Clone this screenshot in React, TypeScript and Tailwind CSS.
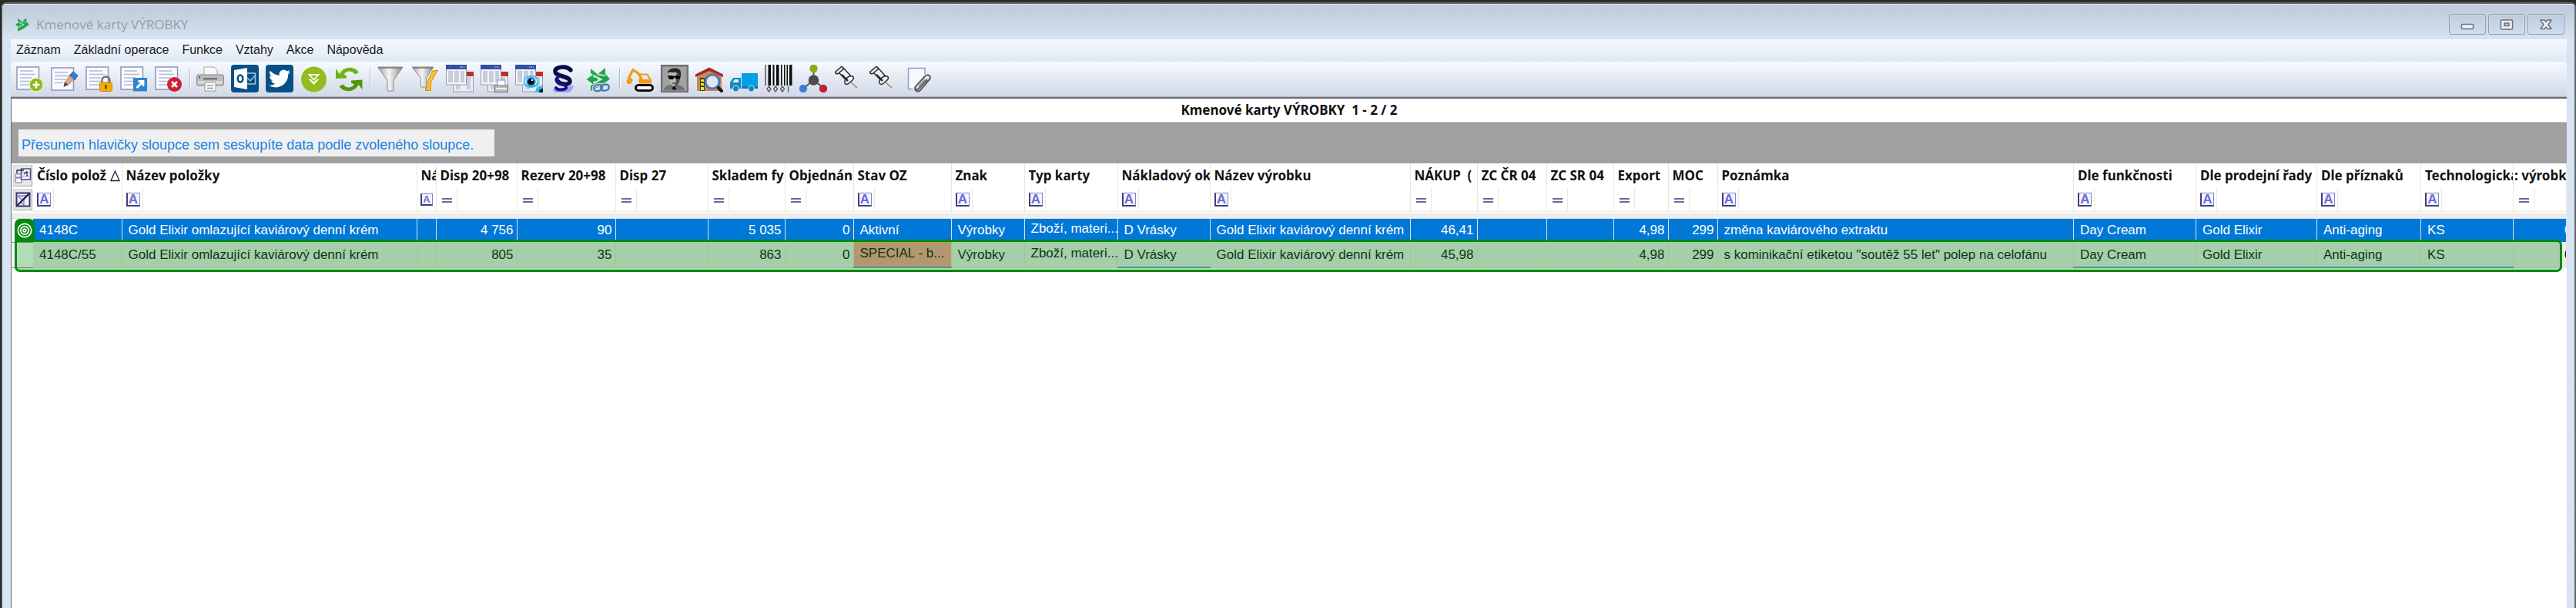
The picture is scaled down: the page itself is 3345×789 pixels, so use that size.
import React from "react";

type Filter = "A" | "=";
type Column = {
  title: string;
  width?: string;
  filter: Filter;
  align?: "right";
  cells: [string, string];
  sorted?: boolean;
  raised?: boolean;
  underline?: boolean;
  flagged?: boolean;
  narrow?: boolean;
  cut?: boolean;
};

const KREM = "Gold Elixir kaviárový denní krém";
const KREM_LONG = "Gold Elixir omlazující kaviárový denní krém";

const columns: Column[] = [
  { title: "Číslo polož", width: "w-[115px]", filter: "A", cells: ["4148C", "4148C/55"], sorted: true },
  { title: "Název položky", width: "w-[383px]", filter: "A", cells: [KREM_LONG, KREM_LONG] },
  { title: "Ná", width: "w-[25px]", filter: "A", cells: ["", ""], narrow: true },
  { title: "Disp 20+98", width: "w-[105px]", filter: "=", align: "right", cells: ["4 756", "805"] },
  { title: "Rezerv 20+98", width: "w-[128px]", filter: "=", align: "right", cells: ["90", "35"] },
  { title: "Disp 27", width: "w-[120px]", filter: "=", align: "right", cells: ["", ""] },
  { title: "Skladem fy", width: "w-[100px]", filter: "=", align: "right", cells: ["5 035", "863"] },
  { title: "Objednán", width: "w-[89px]", filter: "=", align: "right", cells: ["0", "0"] },
  { title: "Stav OZ", width: "w-[127px]", filter: "A", cells: ["Aktivní", "SPECIAL - b..."], flagged: true, underline: true },
  { title: "Znak", width: "w-[95px]", filter: "A", cells: ["Výrobky", "Výrobky"] },
  { title: "Typ karty", width: "w-[121px]", filter: "A", cells: ["Zboží, materi...", "Zboží, materi..."], raised: true },
  { title: "Nákladový ok", width: "w-[120px]", filter: "A", cells: ["D Vrásky", "D Vrásky"], underline: true },
  { title: "Název výrobku", width: "w-[260px]", filter: "A", cells: [KREM, KREM] },
  { title: "NÁKUP  (", width: "w-[87px]", filter: "=", align: "right", cells: ["46,41", "45,98"] },
  { title: "ZC ČR 04", width: "w-[90px]", filter: "=", align: "right", cells: ["", ""] },
  { title: "ZC SR 04", width: "w-[87px]", filter: "=", align: "right", cells: ["", ""] },
  { title: "Export", width: "w-[71px]", filter: "=", align: "right", cells: ["4,98", "4,98"] },
  { title: "MOC", width: "w-[64px]", filter: "=", align: "right", cells: ["299", "299"] },
  { title: "Poznámka", filter: "A", cells: ["změna kaviárového extraktu", 's kominikační etiketou "soutěž 55 let" polep na celofánu'] },
  { title: "Dle funkčnosti", width: "w-[159px]", filter: "A", cells: ["Day Cream", "Day Cream"], underline: true },
  { title: "Dle prodejní řady", width: "w-[157px]", filter: "A", cells: ["Gold Elixir", "Gold Elixir"], underline: true },
  { title: "Dle příznaků", width: "w-[135px]", filter: "A", cells: ["Anti-aging", "Anti-aging"], underline: true },
  { title: "Technologická", width: "w-[120px]", filter: "A", cells: ["KS", "KS"], underline: true },
  { title: ": výrobku", width: "w-[69px]", filter: "=", cells: ["0", "0"], cut: true },
];

/* ---------- icons ---------- */

function Svg({ children }: { children: React.ReactNode }) {
  return (
    <svg viewBox="0 0 36 36" className="h-9 w-9" aria-hidden="true">
      {children}
    </svg>
  );
}

function Sheet() {
  return (
    <>
      <rect x="1" y="3" width="28.500" height="29" fill="#f8fafd" stroke="#8d94bd" strokeWidth="1.500" />
      <path d="M5 8h17M5 12.500h20M5 17h15M5 21.500h17M5 26h13" stroke="#b3bbd6" strokeWidth="1.700" />
    </>
  );
}

const NewIcon = () => (
  <Svg>
    <Sheet />
    <circle cx="26" cy="26" r="8.800" fill="#8dbb1c" stroke="#eef5dc" />
    <path d="M26 21.500v9M21.500 26h9" stroke="#fff" strokeWidth="2.600" />
  </Svg>
);

const EditIcon = () => (
  <Svg>
    <rect x="1" y="4" width="28.500" height="29" fill="#f8fafd" stroke="#8d94bd" strokeWidth="1.500" />
    <path d="M5 10h17M5 14.500h19M5 19h15M5 23.500h11" stroke="#b3bbd6" strokeWidth="1.700" />
    <path d="M29 9l6 5-4 6-7-6z" fill="#3b78cf" stroke="#2a5fb4" />
    <path d="M24 14l6 5.500-8 7.500-4-4z" fill="#d9a58c" stroke="#b98770" strokeWidth=".7" />
    <path d="M18 22l4.500 4-6 3z" fill="#4a4350" />
  </Svg>
);

const LockIcon = () => (
  <Svg>
    <Sheet />
    <path d="M21.500 24v-3.500a5 5 0 0 1 10 0V24" fill="none" stroke="#707070" strokeWidth="2.400" />
    <rect x="18.500" y="23" width="16" height="11.500" rx="2" fill="#f2ad0c" stroke="#c98a00" />
    <path d="M26.500 26v5.500" stroke="#5f4300" strokeWidth="2.400" />
  </Svg>
);

const ShortcutIcon = () => (
  <Svg>
    <Sheet />
    <rect x="17" y="17" width="18" height="17.500" fill="#2f86cf" />
    <path d="M21.500 30l8-8M23.500 21.500H30V28" fill="none" stroke="#fff" strokeWidth="2.800" />
  </Svg>
);

const DeleteIcon = () => (
  <Svg>
    <Sheet />
    <circle cx="25.500" cy="25.500" r="9.500" fill="#cf202f" />
    <path d="M22 22l7 7M29 22l-7 7" stroke="#fff" strokeWidth="2.600" />
  </Svg>
);

const PrintIcon = () => (
  <Svg>
    <path d="M10 14V3h13l4 4v7z" fill="#fafafa" stroke="#a5a5a5" />
    <rect x=".7" y="13" width="34.600" height="14" rx="1.500" fill="#bdbdbd" stroke="#858585" />
    <path d="M2 23h32" stroke="#e0e0e0" strokeWidth="3" />
    <path d="M4 15v3" stroke="#555" strokeWidth="1.500" />
    <rect x="9" y="17" width="18" height="2.500" fill="#777" />
    <path d="M11 23h14v11H11z" fill="#fafafa" stroke="#9a9a9a" />
    <path d="M14 27h8M14 30.500h8" stroke="#999" strokeWidth="1.500" />
  </Svg>
);

const OutlookIcon = () => (
  <Svg>
    <rect width="36" height="36" rx="4" fill="#065089" />
    <rect x="18" y="11" width="13.500" height="14" fill="none" stroke="#a8c3da" strokeWidth="1.500" />
    <path d="M21 17l4 4 6-7" fill="none" stroke="#a8c3da" strokeWidth="1.500" />
    <path d="M4 7l17-3v28L4 29z" fill="#fff" />
    <ellipse cx="12" cy="18" rx="3.300" ry="4.500" fill="none" stroke="#065089" strokeWidth="2.600" />
  </Svg>
);

const BirdIcon = () => (
  <Svg>
    <rect width="36" height="36" rx="4" fill="#065089" />
    <g transform="translate(4 4) scale(1.170)">
      <path
        fill="#fff"
        d="M23.953 4.570a10 10 0 0 1-2.825.775 4.958 4.958 0 0 0 2.163-2.723 9.990 9.990 0 0 1-3.127 1.184 4.920 4.920 0 0 0-8.384 4.482C7.690 8.095 4.067 6.130 1.640 3.162a4.822 4.822 0 0 0-.666 2.475c0 1.710.870 3.213 2.188 4.096a4.904 4.904 0 0 1-2.228-.616v.060a4.923 4.923 0 0 0 3.946 4.827 4.996 4.996 0 0 1-2.212.085 4.936 4.936 0 0 0 4.604 3.417 9.867 9.867 0 0 1-6.102 2.105c-.390 0-.779-.023-1.170-.067a13.995 13.995 0 0 0 7.557 2.209c9.053 0 13.998-7.496 13.998-13.985 0-.210 0-.420-.015-.630A9.935 9.935 0 0 0 24 4.590z"
      />
    </g>
  </Svg>
);

const DownIcon = () => (
  <Svg>
    <circle cx="17.500" cy="19" r="16.500" fill="#93bd1e" />
    <path d="M11.500 13h12l-6 6.500z" fill="none" stroke="#fff" strokeWidth="1.800" />
    <path d="M10.500 18.500L17.500 26l7-7.500-3.500.500-3.500 3.500-3.500-3.500z" fill="#fff" />
  </Svg>
);

const RefreshIcon = () => (
  <Svg>
    <path d="M6 12C11 2 25 1 31 10l-5 2.500C22 7 15 7.500 11.500 12.500L15 14v3.500L1 18V5z" fill="#6cb512" />
    <path d="M30.500 26c-5 10-19 11-25 2l5-2.500c4 5.500 11 5 14.500 0l-4-2V20.500l14.500-1V32z" fill="#4f9708" />
  </Svg>
);

function FunnelGradient({ id }: { id: string }) {
  return (
    <linearGradient id={id}>
      <stop offset="0" stopColor="#9d9d9d" />
      <stop offset=".45" stopColor="#f5f5f5" />
      <stop offset="1" stopColor="#8c8c8c" />
    </linearGradient>
  );
}

const FunnelIcon = () => (
  <Svg>
    <FunnelGradient id="funnel" />
    <path d="M1.500 3h32.500L22 20.500V34h-8V20.500z" fill="url(#funnel)" stroke="#8c8c8c" />
    <path d="M3 4h30" stroke="#777" strokeWidth="1.500" />
  </Svg>
);

const FunnelPenIcon = () => (
  <Svg>
    <path d="M28 8l6.500-1-9 16v10.500h-7v-3.500h3v-9z" fill="#fbc02d" stroke="#c98f10" />
    <FunnelGradient id="funnel-small" />
    <path d="M1 3h28L19.500 17.500V29h-7V17.500z" fill="url(#funnel-small)" stroke="#8c8c8c" />
    <path d="M2 4h26" stroke="#777" strokeWidth="1.500" />
  </Svg>
);

function Grids() {
  return (
    <>
      <rect x="9.500" y="10" width="26" height="25" fill="#eceef4" stroke="#9a9cab" />
      <path d="M13 16h6v16h-6zM27 16h5v16h-5z" fill="#c9ccda" />
      <path d="M27 9h9v6h-9z" fill="#bf2b2f" />
      <rect x=".5" y="1" width="26" height="25" fill="#f3f4f9" stroke="#9a9cab" />
      <path d="M3 8h6v15H3zM11 8h6v15h-6zM19 8h5v15h-5z" fill="#c9ccda" />
      <path d="M0 0h27v6H0z" fill="#344fa8" />
      <path d="M18 3h6" stroke="#a9b7e8" strokeWidth="1.500" strokeDasharray="1.500 1" />
    </>
  );
}

const GridIcon = () => (
  <Svg>
    <Grids />
  </Svg>
);

const GridPrintIcon = () => (
  <Svg>
    <Grids />
    <rect x="22" y="20" width="10" height="9" fill="#fff" stroke="#8090b5" />
    <rect x="18.500" y="27" width="17" height="8.500" fill="#bdbdbd" stroke="#6f6f6f" />
    <path d="M20 31h14" stroke="#f2f2f2" strokeWidth="2" />
  </Svg>
);

const GridEyeIcon = () => (
  <Svg>
    <Grids />
    <path d="M26 36c0-5 4-9 10-9v9z" fill="#2fb8f5" />
    <path d="M31 36c0-3 2-5 5-5v5z" fill="#06131a" />
    <ellipse cx="20.500" cy="22" rx="10" ry="8" fill="#37b6f2" />
    <ellipse cx="20.500" cy="21.500" rx="8.500" ry="6" fill="#bfeafd" />
    <circle cx="20.500" cy="22" r="6" fill="#1b8fd0" />
    <circle cx="20.500" cy="22" r="4" fill="#04090d" />
    <circle cx="22" cy="20" r="1.300" fill="#fff" />
  </Svg>
);

const ParagraphIcon = () => (
  <Svg>
    <path d="M27 27c3 8-18 10-21 4" fill="none" stroke="#5b5bef" strokeWidth="6" opacity=".45" />
    <path d="M27 7C22 1 6 2 7 9c1 7 18 5 19 12 1 6-12 5-15 1" fill="none" stroke="#0b0b4a" strokeWidth="5.500" strokeLinecap="round" />
    <path d="M11 16c-5 3-2 8 4 9s9 6 3 7-9 0-10-2" fill="none" stroke="#14148a" strokeWidth="4" strokeLinecap="round" />
  </Svg>
);

function BrandMark({ gap }: { gap: string }) {
  return (
    <>
      <path d="M8 5l9 7.500L27 4v8l6 6.500-12 9L8 34v-7.500L21 19 8 12z" fill="#1fa64a" />
      <path d="M8 12l14 7-14 7M17 12.500l10 1.500" fill="none" stroke={gap} strokeWidth="1.500" />
      <path d="M2.500 19l9-6.500v4H15l3 2.500-3 2.500h-3.500v4z" fill="#1fa64a" />
    </>
  );
}

const LinkIcon = () => (
  <Svg>
    <BrandMark gap="#e8eef6" />
    <g fill="none" stroke="#e1e8f2" strokeWidth="4.600">
      <rect x="12" y="26.500" width="11" height="7.500" rx="3.700" transform="rotate(-12 17 30)" />
      <rect x="21" y="26" width="11" height="7.500" rx="3.700" transform="rotate(-12 26 30)" />
    </g>
    <g fill="none" stroke="#4d80b6" strokeWidth="2.600">
      <rect x="12" y="26.500" width="11" height="7.500" rx="3.700" transform="rotate(-12 17 30)" />
      <rect x="21" y="26" width="11" height="7.500" rx="3.700" transform="rotate(-12 26 30)" />
    </g>
  </Svg>
);

const DiggerIcon = () => (
  <Svg>
    <path d="M2 25c-3-3-1-7 3-9l4 4-3 5z" fill="#f39c12" />
    <path d="M3 18L9 6.500l7 5 5 9" fill="none" stroke="#f39c12" strokeWidth="3.200" strokeLinejoin="round" />
    <path d="M16 19h17v5.500H17z" fill="#f39c12" />
    <path d="M18.500 19v-6.500h9l4 7" fill="none" stroke="#f39c12" strokeWidth="2.200" />
    <rect x="12.500" y="26.500" width="22" height="7" rx="3.500" fill="#fff" stroke="#0c0c0c" strokeWidth="3" />
  </Svg>
);

const AgentIcon = () => (
  <Svg>
    <rect x=".7" y=".7" width="34.600" height="34.600" fill="#8e8e8e" stroke="#636363" strokeWidth="1.500" />
    <rect x="3" y="3" width="30" height="30" fill="#a2a2a2" />
    <path d="M4 33c1-5 4-6 8-7h10c5 1 8 3 9 7z" fill="#747474" />
    <path d="M10 10c2-5 13-5 15 0l-1 10c-1 4-3 8-6 8s-6-4-7-8z" fill="#b9b9b9" />
    <path d="M18 28c4 0 6-5 7-9V9l-5-1 1 9z" fill="#505050" />
    <path d="M9 11C9 3 26 2 26 10v5c-2-4-5-6-8-5-4 0-7-1-9 1z" fill="#262626" />
    <path d="M9 14h6l2 1 2-1h7l-1 4-5 1-2-3-2 3h-5z" fill="#0a0a0a" />
    <path d="M15 24h4M15 30l3-2 2 4h-4z" stroke="#151515" fill="#151515" />
  </Svg>
);

const WarehouseIcon = () => (
  <Svg>
    <path d="M2 13L18 6l16 7v21H2z" fill="#c48a5b" />
    <path d="M0 12.500L18 3.500l18 9v3.500L18 8 0 16z" fill="#a8282b" />
    <path d="M6 17h6v17H6z" fill="#3a3a2a" />
    <path d="M7 19h4v3H7zM7 24h4v3H7zM7 29h4v4H7z" fill="#f7ea13" />
    <circle cx="22" cy="22" r="9" fill="#dfe6ef" stroke="#5379ad" strokeWidth="3" />
    <path d="M30 30l4 4" stroke="#1a1a1a" strokeWidth="4.500" strokeLinecap="round" />
  </Svg>
);

const TruckIcon = () => (
  <Svg>
    <path d="M15 11h21v20H15z" fill="#03a0e6" />
    <path d="M15 28h21v3H15z" fill="#0b79ad" />
    <path d="M0 31v-8l4-6h10v14z" fill="#1486bd" />
    <path d="M3 23l3-4h5v4z" fill="#dff2fb" />
    <circle cx="7.500" cy="31" r="4" fill="#0f86bf" stroke="#cfe6f2" />
    <circle cx="27.500" cy="31" r="4" fill="#0f86bf" stroke="#cfe6f2" />
  </Svg>
);

const BarcodeIcon = () => (
  <Svg>
    <path d="M.500 0h1v27h-1zM4.500 0h3.500v27H4.500zM10.500 0h2v27h-2zM15 0h3.500v27H15zM21 0h1.500v27H21zM25 0h1.500v27H25zM28.500 0h1.500v27h-1.500zM32 0h3.500v27H32z" fill="#0c0c0c" />
    <g fill="none" stroke="#555" strokeWidth="1.300">
      <path d="M5.500 28l2.500 3.500-2.500 3.500L3 31.500zM14 28l2.500 3.500L14 35l-2.500-3.500zM23 28l2.500 3.500L23 35l-2.500-3.500zM30.500 28v7.500" />
    </g>
  </Svg>
);

const MoleculeIcon = () => (
  <Svg>
    <path d="M18.500 8v12M18.500 20L6 30M18.500 20L31 30" stroke="#555" strokeWidth="2" />
    <circle cx="18.500" cy="5" r="5.200" fill="#86ad15" />
    <circle cx="18.500" cy="20" r="6.800" fill="#4b4b4b" />
    <circle cx="5" cy="31" r="5.200" fill="#3f7dd6" />
    <circle cx="31" cy="31" r="5.200" fill="#c22033" />
  </Svg>
);

const PinIcon = () => (
  <Svg>
    <path d="M21 22l9 8" stroke="#8a8a8a" strokeWidth="1.500" />
    <g stroke="#2b2b2b" strokeWidth="1.500" strokeLinejoin="round">
      <path d="M6 10l7-5 9 10-6 5z" fill="#f0f0f0" />
      <path d="M2 9l7-6c2-1 4 1 3 3l-6 5c-2 2-5 0-4-2z" fill="#e4e4e4" />
      <path d="M14 23c-1-4 5-9 10-8 2 1 2 3 0 5l-6 5c-2 1-4 0-4-2z" fill="#f7f7f7" />
    </g>
    <path d="M10 13l8 8" stroke="#2b2b2b" strokeWidth="2.500" />
  </Svg>
);

const AttachIcon = () => (
  <Svg>
    <path d="M6.500 31.500V4.500h21.500V14L14 31.500z" fill="#f6f8fd" />
    <path d="M12 31.500H6.500V4.500h21.500V12" fill="none" stroke="#8d9ccc" strokeWidth="1.500" />
    <path d="M31 19L20 31c-3 3-6 0-4-3l12-13c4-4 9 0 6 4L22 33c-4 4-9-1-6-5" fill="none" stroke="#5b5b5b" strokeWidth="2" />
    <path d="M20 28l8-9" stroke="#8a8a8a" strokeWidth="1.500" />
  </Svg>
);

type Tool = { label: string; icon: () => React.ReactElement };

const toolGroups: Tool[][] = [
  [
    { label: "Nový", icon: NewIcon },
    { label: "Upravit", icon: EditIcon },
    { label: "Zamknout", icon: LockIcon },
    { label: "Zástupce", icon: ShortcutIcon },
    { label: "Smazat", icon: DeleteIcon },
  ],
  [
    { label: "Tisk", icon: PrintIcon },
    { label: "Outlook", icon: OutlookIcon },
    { label: "Twitter", icon: BirdIcon },
    { label: "Stáhnout", icon: DownIcon },
    { label: "Obnovit", icon: RefreshIcon },
  ],
  [
    { label: "Filtr", icon: FunnelIcon },
    { label: "Upravit filtr", icon: FunnelPenIcon },
    { label: "Sestavy", icon: GridIcon },
    { label: "Tisk sestavy", icon: GridPrintIcon },
    { label: "Náhled sestavy", icon: GridEyeIcon },
    { label: "Paragraf", icon: ParagraphIcon },
    { label: "Propojit", icon: LinkIcon },
  ],
  [
    { label: "Výroba", icon: DiggerIcon },
    { label: "Agent", icon: AgentIcon },
    { label: "Sklad", icon: WarehouseIcon },
    { label: "Doprava", icon: TruckIcon },
    { label: "Čárový kód", icon: BarcodeIcon },
    { label: "Vazby", icon: MoleculeIcon },
    { label: "Připnout", icon: PinIcon },
    { label: "Připnout vše", icon: PinIcon },
    { label: "Příloha", icon: AttachIcon },
  ],
];

/* ---------- window chrome ---------- */

const captionButton =
  "flex h-[27px] w-12 items-center justify-center rounded-[3px] border border-[#8d9bb8] bg-linear-to-b from-[#bdcbdb] to-[#cfddec] shadow-[inset_0_0_0_1px_#d3deea]";

function TitleBar() {
  return (
    <header className="flex h-[45px] items-start justify-between pr-[3px] pl-[5px]">
      <div className="flex items-center gap-2 pt-[14px]">
        <svg viewBox="1 2 34 34" className="h-5 w-5" aria-hidden="true">
          <BrandMark gap="#c9d6e4" />
        </svg>
        <h1 className="font-['Open_Sans','Noto_Sans',sans-serif] text-[17px] leading-6 text-[#9a9da3]">Kmenové karty VÝROBKY</h1>
      </div>
      <div className="flex gap-[3px] pt-3">
        <button type="button" aria-label="Minimalizovat" className={captionButton}>
          <svg viewBox="0 0 20 16" className="h-4 w-5" aria-hidden="true">
            <rect x="2.500" y="7.500" width="15" height="6" rx="1" fill="#f1f1f1" stroke="#6a7080" strokeWidth="1.500" />
          </svg>
        </button>
        <button type="button" aria-label="Maximalizovat" className={captionButton}>
          <svg viewBox="0 0 20 16" className="h-4 w-5" aria-hidden="true">
            <rect x="2.500" y="2" width="15" height="12" rx="1" fill="#f1f1f1" stroke="#6a7080" strokeWidth="1.500" />
            <rect x="7" y="6" width="6" height="3.500" fill="#b9c8d9" stroke="#6a7080" strokeWidth="1.500" />
          </svg>
        </button>
        <button type="button" aria-label="Zavřít" className={captionButton}>
          <svg viewBox="0 0 20 16" className="h-4 w-5" aria-hidden="true">
            <path d="M3 2h5l2 2.500L12 2h5l-4 6 4 5.500h-5L10 11l-2 2.500H3L7 8z" fill="#f1f1f1" stroke="#6a7080" strokeWidth="1.500" strokeLinejoin="round" />
          </svg>
        </button>
      </div>
    </header>
  );
}

function MenuBar() {
  return (
    <nav className="flex h-[29px] items-center gap-[17px] bg-linear-to-b from-[#f4f9ff] to-[#dfe9f5] pb-px pl-[7px] text-[16px] leading-5 text-[#1b1b1b]">
      {["Záznam", "Základní operace", "Funkce", "Vztahy", "Akce", "Nápověda"].map((m) => (
        <button key={m} type="button">
          {m}
        </button>
      ))}
    </nav>
  );
}

function ToolBar() {
  return (
    <div role="toolbar" className="flex h-[46px] items-center rounded-t border-b border-[#a3b3c9] bg-linear-to-b from-[#f6faff] to-[#d2d9e6] pb-[2px] pl-[7px]">
      {toolGroups.map((group, i) => (
        <div key={i} className="flex items-center">
          {i > 0 && (
            <span className="flex w-[9px]">
              <span className="h-[26px] w-px bg-[#a9b8cf]" />
              <span className="h-[26px] w-px bg-white" />
            </span>
          )}
          {group.map(({ label, icon: Icon }) => (
            <button key={label} type="button" aria-label={label} className="w-[45px]">
              <Icon />
            </button>
          ))}
        </div>
      ))}
    </div>
  );
}

/* ---------- grid ---------- */

function OperatorIcon({ kind, small }: { kind: Filter; small?: boolean }) {
  if (kind === "=") {
    return (
      <svg viewBox="0 0 18 18" className="h-[18px] w-[18px]" aria-hidden="true">
        <path d="M2 8h13M2 12h13" stroke="#6b6996" strokeWidth="2" />
      </svg>
    );
  }
  return (
    <span
      className={
        "flex items-center justify-center border-t border-r border-b-2 border-l-2 border-t-[#8080cc] border-r-[#8080cc] border-b-[#3f3f7a] border-l-[#3f3f7a] bg-[#f6f6ff] font-bold text-[#6c6cd8] " +
        (small ? "h-4 w-4 text-[13px]" : "h-[18px] w-[18px] text-[17px]")
      }
    >
      A
    </span>
  );
}

const selectorButton = "flex items-center justify-center border border-t-[#d4d4d4] border-l-[#d4d4d4] border-r-[#a8a8a8] border-b-[#a8a8a8] bg-[#e6e6e6]";

function CellText({ column, row }: { column: Column; row: 0 | 1 }) {
  const pad = column.cut ? "pl-[66px]" : column.align === "right" ? "pr-1 text-right" : "pl-2";
  const lift = column.raised || (column.flagged && row === 1) ? "pb-[3px]" : "pt-px";
  return <div className={`overflow-hidden whitespace-nowrap ${pad} ${lift}`}>{column.cells[row]}</div>;
}

function Grid() {
  return (
    <div className="relative">
      <table className="w-full table-fixed border-collapse">
        <colgroup>
          <col className="w-7" />
          {columns.map((c) => (
            <col key={c.title} className={c.width} />
          ))}
        </colgroup>
        <thead>
          <tr className="h-8">
            <th className="p-0">
              <button type="button" aria-label="Výběr sloupců" className={`${selectorButton} ml-[2px] h-7 w-[25px]`}>
                <svg viewBox="0 0 22 22" className="h-[22px] w-[22px]" aria-hidden="true">
                  <path d="M1 9h8v4H1zM1 14h8v6H1z" fill="#fff" stroke="#6a6fa5" />
                  <path d="M8.500 2h12v14h-12z" fill="#f4f4fb" stroke="#4c4f88" strokeWidth="1.500" />
                  <path d="M9 7h11M9 11.500h11" stroke="#9a9dc8" />
                  <path d="M3 8V4h9M16 5v7M12 9l3-3" fill="none" stroke="#23244f" strokeWidth="1.300" />
                </svg>
              </button>
            </th>
            {columns.map((c) => (
              <th key={c.title} scope="col" className="border-r border-[#e6e6e6] p-0 text-left font-['Noto_Sans',sans-serif] text-[17px] leading-6 font-bold text-[#111]">
                <div className={`flex items-center justify-between ${c.cut ? "pl-px" : "pl-[5px]"}`}>
                  <span className="overflow-hidden whitespace-pre">{c.title}</span>
                  {c.sorted && (
                    <svg viewBox="2 0 16 18" className="h-[18px] w-4 shrink-0" aria-hidden="true">
                      <path d="M4 15.500L9.500 3 15 15.500z" fill="#fff" stroke="#222" strokeWidth="1.300" />
                    </svg>
                  )}
                </div>
              </th>
            ))}
          </tr>
          <tr className="h-[30px]">
            <td className="p-0">
              <button type="button" aria-label="Zrušit filtry" className={`${selectorButton} ml-[2px] h-7 w-[25px]`}>
                <svg viewBox="0 0 20 20" className="h-5 w-5" aria-hidden="true">
                  <rect x="1.500" y="1.500" width="17" height="17" fill="#f1f1fb" stroke="#34356b" strokeWidth="2" />
                  <path d="M3 5h13l-5 5v7l-3-2v-5z" fill="#d9d9f3" stroke="#7d7fc4" strokeWidth="1.300" />
                  <path d="M2 18L18 2" stroke="#22234f" strokeWidth="2.200" />
                </svg>
              </button>
            </td>
            {columns.map((c) => (
              <td key={c.title} className="border-r border-b border-[#ece9d8] p-0">
                <div className={`flex h-[29px] items-center ${c.narrow ? "pl-1" : "pl-[5px]"}`}>
                  <button type="button" aria-label={`Operátor: ${c.title}`}>
                    <OperatorIcon kind={c.filter} small={c.narrow} />
                  </button>
                  {!c.narrow && (
                    <input type="text" aria-label={`Filtr: ${c.title}`} className="ml-[3px] h-full min-w-0 flex-1 border-l border-[#ece9d8] bg-transparent" />
                  )}
                </div>
              </td>
            ))}
          </tr>
          <tr className="h-[9px]">
            <td colSpan={columns.length + 1} className="border-b border-[#d9d9d9] bg-linear-to-b from-white from-30% to-[#ececec] to-30% p-0" />
          </tr>
        </thead>
        <tbody className="text-[17px] leading-6">
          <tr className="h-[31px] bg-[#0078d7] text-white">
            <td className="bg-white p-0" />
            {columns.map((c) => (
              <td key={c.title} className="border-r border-[#d5e3ee] p-0">
                <CellText column={c} row={0} />
              </td>
            ))}
          </tr>
          <tr className="h-[33px] bg-[#ebebf0] text-[#111]">
            <td className="border-t border-b border-[#8a8a8a] bg-white p-0" />
            {columns.map((c) => (
              <td
                key={c.title}
                className={`border-r border-r-[#e7e3c4] p-0 ${c.underline ? "border-b-2 border-b-[#6aa1c8]" : "border-b border-b-[#e7e3c4]"} ${c.flagged ? "bg-[#ff9e9a]" : ""}`}
              >
                <CellText column={c} row={1} />
              </td>
            ))}
          </tr>
        </tbody>
      </table>
      <div className="pointer-events-none absolute top-[99px] right-[6px] left-1 h-[42px] rounded-tr-[7px] rounded-b-[7px] border-[3px] border-[#048a0c] bg-[#048a0c]/30" />
      <div className="pointer-events-none absolute top-[72px] left-1 flex h-[29px] w-[26px] items-center justify-center rounded-t-[7px] bg-[#048a0c]">
        <svg viewBox="0 0 20 20" className="h-5 w-5" fill="none" stroke="#fff" strokeWidth="1.700" aria-hidden="true">
          <circle cx="10" cy="10" r="8.700" />
          <circle cx="10" cy="10" r="5.200" />
          <circle cx="10" cy="10" r="1.800" />
        </svg>
      </div>
    </div>
  );
}

export default function App() {
  return (
    <div className="flex min-h-screen flex-col bg-[#2b2b2b] pt-[3px] pl-[2px] font-['Liberation_Sans',Arial,sans-serif]">
      <div className="flex grow flex-col rounded-t-[6px] border-t-2 border-r-2 border-l border-[#666] bg-[#d7e4f2]">
        <div className="flex grow flex-col rounded-t-[5px] border-t border-[#dfe7f0] bg-linear-to-b from-[#bccad9] to-[#d7e4f2] to-[46px] pr-[10px] pl-[11px]">
          <TitleBar />
          <MenuBar />
          <ToolBar />
          <main className="flex grow flex-col border-t-2 border-l border-[#6b6b70] bg-white">
            <h2 className="flex h-[31px] items-center justify-center border-b border-[#c8c8c8] font-['Noto_Sans',sans-serif] text-[17px] leading-6 font-bold whitespace-pre text-[#111]">
              {"Kmenové karty VÝROBKY  1 - 2 / 2"}
            </h2>
            <div className="bg-[#a0a0a0] px-[9px] pt-[9px] pb-[9px]">
              <p className="flex h-[35px] w-[618px] items-center bg-[#f0f0f0] pt-1 pl-1 text-[18px] leading-6 whitespace-nowrap text-[#1883e0]">
                Přesunem hlavičky sloupce sem seskupíte data podle zvoleného sloupce.
              </p>
            </div>
            <Grid />
          </main>
        </div>
      </div>
    </div>
  );
}
